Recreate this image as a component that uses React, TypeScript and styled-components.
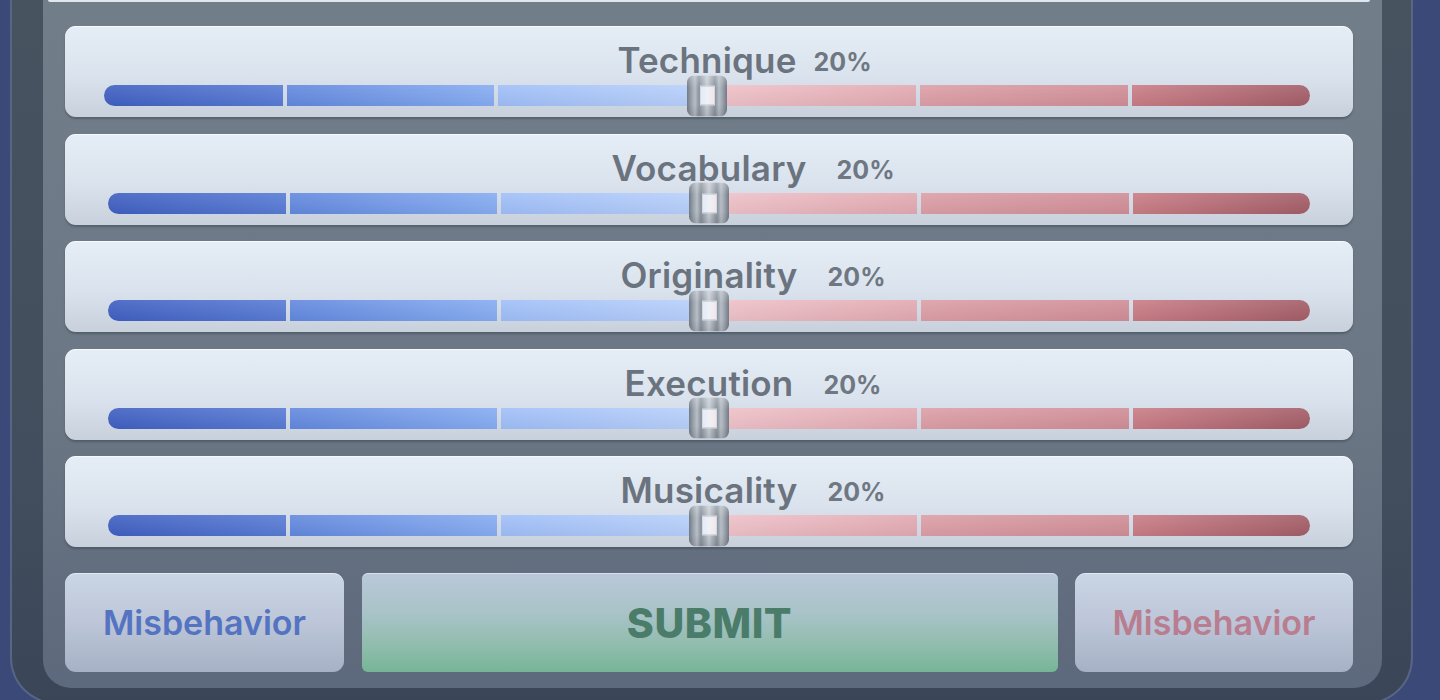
import React from 'react';
import styled, { createGlobalStyle } from 'styled-components';

const GlobalStyle = createGlobalStyle`
  html, body {
    margin: 0;
    padding: 0;
    background: #3d4c7b;
    overflow: hidden;
  }
  body {
    font-family: Inter, "Noto Sans", "Liberation Sans", sans-serif;
  }
`;

type Criterion = { name: string; pct: number; gap: number; left: number };

const criteria: Criterion[] = [
  { name: 'Technique', pct: 20, gap: 17, left: 39 },
  { name: 'Vocabulary', pct: 20, gap: 30, left: 43 },
  { name: 'Originality', pct: 20, gap: 30, left: 43 },
  { name: 'Execution', pct: 20, gap: 30, left: 43 },
  { name: 'Musicality', pct: 20, gap: 30, left: 43 },
];

type Segment = { grow: number; from: string; to: string };

const blueSegments: Segment[] = [
  { grow: 178, from: '#3f5fc1', to: '#587bd5' },
  { grow: 207, from: '#6288de', to: '#86acf2' },
  { grow: 208, from: '#9fbef8', to: '#b9d1fb' },
];

const redSegments: Segment[] = [
  { grow: 208, from: '#efc3ca', to: '#e2a9b1' },
  { grow: 208, from: '#dc9ea6', to: '#d08d96' },
  { grow: 177, from: '#c97c85', to: '#a35d67' },
];

const Page = styled.div`
  width: 1440px;
  height: 700px;
  overflow: hidden;
  box-sizing: border-box;
  padding: 0 27px 0 10px;
  background: linear-gradient(90deg, #3a4978 0%, #43527f 50%, #3a4978 100%);
`;

const Frame = styled.div`
  margin-top: -40px;
  height: 744px;
  box-sizing: border-box;
  border: 2px solid #586585;
  border-top: none;
  border-radius: 0 0 46px 46px;
  background: linear-gradient(180deg, #47535f 0%, #424e5d 70%, #3a4558 100%);
  padding: 0 29px 14px 31px;
`;

const Panel = styled.div`
  height: 100%;
  box-sizing: border-box;
  border-radius: 0 0 28px 28px;
  background: linear-gradient(180deg, #727e8a 0%, #6b7784 60%, #5d697c 100%);
  padding: 40px 29px 16px 22px;
  display: flex;
  flex-direction: column;
`;

const EdgeStrip = styled.div`
  height: 2px;
  margin: 0 -17px;
  background: #dfe6ee;
  border-radius: 0 0 3px 3px;
`;

const CardList = styled.div`
  margin-top: 24px;
  display: flex;
  flex-direction: column;
  gap: 16.5px;
`;

const Card = styled.div<{ $left: number }>`
  height: 91px;
  box-sizing: border-box;
  border-radius: 11px;
  padding: 14px 43px 0 ${(p) => p.$left}px;
  background: linear-gradient(180deg, #e5edf6 0%, #dae3ed 55%, #c8d1db 100%);
  box-shadow: 0 2px 2px rgba(40, 50, 62, 0.35), inset 0 1px 0 rgba(255, 255, 255, 0.7);
  display: flex;
  flex-direction: column;
`;

const LabelRow = styled.div`
  height: 40px;
  display: grid;
  grid-template-columns: 1fr auto 1fr;
  align-items: center;
`;

const Label = styled.span`
  grid-column: 2;
  font-size: 35px;
  font-weight: 600;
  line-height: 40px;
  color: #6b737f;
  letter-spacing: 0.2px;
`;

const Pct = styled.span<{ $gap: number }>`
  grid-column: 3;
  justify-self: start;
  margin-left: ${(p) => p.$gap}px;
  margin-top: 4px;
  font-size: 25px;
  font-weight: 700;
  color: #6f7782;
`;

const Bar = styled.div`
  position: relative;
  margin-top: 5px;
  height: 21px;
  display: grid;
  grid-template-columns: 1fr 1fr;
`;

const Half = styled.div`
  display: flex;
  gap: 4px;
`;

const Seg = styled.div<{ $grow: number; $from: string; $to: string }>`
  flex: ${(p) => p.$grow} 1 0;
  background:
    linear-gradient(180deg, rgba(255, 255, 255, 0.1) 0%, rgba(0, 0, 0, 0.04) 100%),
    linear-gradient(90deg, ${(p) => p.$from}, ${(p) => p.$to});
  &:first-child {
    border-radius: 0;
  }
`;

const BlueHalf = styled(Half)`
  ${Seg}:first-child {
    border-radius: 11px 0 0 11px;
  }
`;

const RedHalf = styled(Half)`
  ${Seg}:last-child {
    border-radius: 0 11px 11px 0;
  }
`;

/* the slider knob: two metal pillars around a small window */
const Thumb = styled.div`
  position: absolute;
  left: 50%;
  top: 50%;
  width: 40px;
  height: 41px;
  transform: translate(-50%, -50%);
  border-radius: 7px;
  background:
    linear-gradient(180deg, rgba(255, 255, 255, 0.25) 0%, rgba(255, 255, 255, 0) 30%, rgba(0, 0, 0, 0) 70%, rgba(0, 0, 0, 0.1) 100%),
    linear-gradient(90deg, #727a85 0%, #9ea6b0 12%, #b7bec6 20%, #8a929c 30%, #c7cdd4 50%, #8a929c 70%, #b7bec6 80%, #9ea6b0 88%, #727a85 100%);
  display: flex;
  align-items: center;
  justify-content: center;
`;

const ThumbWindow = styled.div`
  width: 15px;
  height: 20px;
  box-sizing: border-box;
  border: 1px solid #d4dae1;
  background: linear-gradient(90deg, #e4ebf7 0%, #eef1f5 50%, #f3e6ea 100%);
`;

const Actions = styled.div`
  margin-top: 26px;
  height: 99px;
  display: grid;
  grid-template-columns: 279px 1fr 278px;
  gap: 17.5px;
`;

const SideButton = styled.button<{ $tone: string }>`
  border: none;
  border-radius: 11px;
  background: linear-gradient(180deg, #cad5e5 0%, #bcc6d8 50%, #a7b1c6 100%);
  box-shadow: inset 0 1px 0 rgba(255, 255, 255, 0.5);
  font-family: Inter, "Noto Sans", sans-serif;
  font-size: 34px;
  font-weight: 600;
  color: ${(p) => p.$tone};
  padding: 0;
  cursor: pointer;
`;

const SubmitButton = styled.button`
  border: none;
  border-radius: 6px;
  background: linear-gradient(180deg, #b9c8d9 0%, #a9c3c8 40%, #8fbcac 75%, #76b597 100%);
  box-shadow: inset 0 1px 0 rgba(255, 255, 255, 0.45);
  font-family: Inter, "Noto Sans", sans-serif;
  font-size: 41px;
  font-weight: 800;
  color: #4b7c6a;
  letter-spacing: 0.5px;
  padding: 0;
  cursor: pointer;
`;

export default function App() {
  return (
    <>
      <GlobalStyle />
      <Page>
        <Frame>
          <Panel>
            <EdgeStrip />
            <CardList>
              {criteria.map((c) => (
                <Card key={c.name} $left={c.left}>
                  <LabelRow>
                    <Label>{c.name}</Label>
                    <Pct $gap={c.gap}>{c.pct}%</Pct>
                  </LabelRow>
                  <Bar>
                    <BlueHalf>
                      {blueSegments.map((s, i) => (
                        <Seg key={i} $grow={s.grow} $from={s.from} $to={s.to} />
                      ))}
                    </BlueHalf>
                    <RedHalf>
                      {redSegments.map((s, i) => (
                        <Seg key={i} $grow={s.grow} $from={s.from} $to={s.to} />
                      ))}
                    </RedHalf>
                    <Thumb>
                      <ThumbWindow />
                    </Thumb>
                  </Bar>
                </Card>
              ))}
            </CardList>
            <Actions>
              <SideButton $tone="#5474c2">Misbehavior</SideButton>
              <SubmitButton>SUBMIT</SubmitButton>
              <SideButton $tone="#b97d90">Misbehavior</SideButton>
            </Actions>
          </Panel>
        </Frame>
      </Page>
    </>
  );
}
